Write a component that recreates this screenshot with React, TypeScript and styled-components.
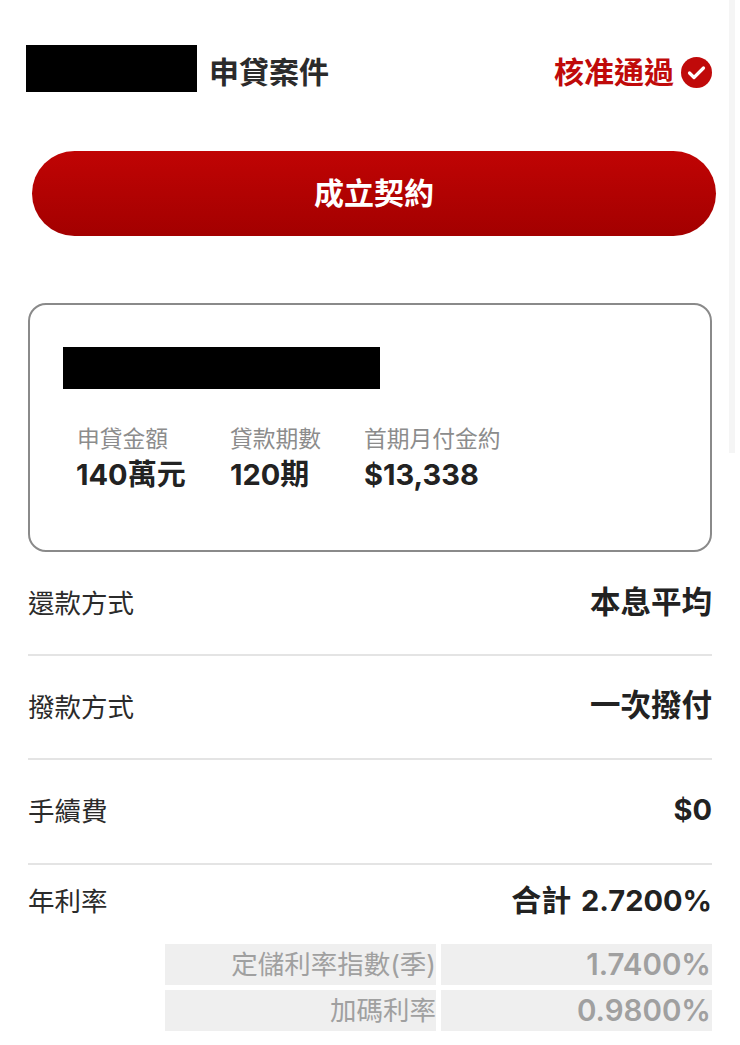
import { createGlobalStyle, styled } from "styled-components";

const GlobalStyle = createGlobalStyle`
  html, body {
    margin: 0;
    background: #fff;
  }
  body {
    font-family: Inter, "Noto Sans CJK TC", sans-serif;
    color: #222;
  }
`;

const Page = styled.div`
  position: relative;
  width: 740px;
  height: 1045px;
  box-sizing: border-box;
  padding: 45px 28px 0 26px;
  overflow: hidden;
`;

const ScrollThumb = styled.div`
  position: absolute;
  top: 0;
  right: 5px;
  width: 6px;
  height: 453px;
  background: #f5f5f5;
`;

const Header = styled.header`
  display: flex;
  align-items: center;
  justify-content: space-between;
  height: 47px;
`;

const HeaderLeft = styled.div`
  display: flex;
  align-items: center;
  gap: 12px;
`;

const Redacted = styled.div<{ $w: number; $h: number }>`
  width: ${(p) => p.$w}px;
  height: ${(p) => p.$h}px;
  background: #000;
`;

const HeaderTitle = styled.h1`
  margin: 0;
  padding-top: 2px;
  font-size: 30px;
  font-weight: 700;
  color: #2b2b2b;
`;

const Status = styled.div`
  display: flex;
  align-items: center;
  gap: 7px;
  padding-top: 2px;
  font-size: 30px;
  font-weight: 700;
  color: #c00a0a;

  svg {
    margin-top: 6px;
  }
`;

const ContractButton = styled.button`
  display: block;
  width: 684px;
  height: 85px;
  margin: 59px 0 0 6px;
  padding: 0 0 6px;
  border: none;
  border-radius: 43px;
  background: linear-gradient(180deg, #c00404 0%, #a30000 100%);
  color: #fff;
  font: 700 30px Inter, "Noto Sans CJK TC", sans-serif;
`;

const Card = styled.section`
  width: 684px;
  height: 249px;
  box-sizing: border-box;
  margin: 67px 0 0 2px;
  padding: 42px 33px 0;
  border: 2px solid #8a8a8a;
  border-radius: 18px;
`;

const Stats = styled.div`
  display: flex;
  margin-top: 33px;
`;

const StatLabel = styled.div`
  font-size: 22.75px;
  line-height: 33px;
  color: #8c8c8c;
`;

const StatValue = styled.div`
  font-size: 29px;
  line-height: 40px;
  font-weight: 700;
  color: #222;
`;

const Stat = styled.div<{ $w: number }>`
  width: ${(p) => p.$w}px;
  box-sizing: border-box;
  padding-left: 14px;

  &:first-child ${StatValue} {
    margin-left: -1px;
  }
`;

const Rows = styled.div`
  margin-left: 2px;
  width: 684px;
`;

const Row = styled.div`
  display: flex;
  align-items: center;
  justify-content: space-between;
  height: 104px;
  padding-bottom: 4px;
  border-bottom: 2px solid #e4e4e4;
  box-sizing: border-box;

  &:nth-child(3) {
    height: 105px;
  }
`;

const RateRow = styled(Row)`
  height: 79px;
  padding-bottom: 10px;
  border-bottom: none;
`;

const RowLabel = styled.div`
  font-size: 26.5px;
  color: #2b2b2b;
`;

const RowValue = styled.div<{ $lift: number }>`
  margin-bottom: ${(p) => p.$lift}px;
  font-size: 29px;
  font-weight: 700;
  color: #222;
`;

const Han = styled.span`
  font-size: 30.5px;
`;

const HanPrefix = styled(Han)`
  margin-right: 3px;
  font-size: 30px;
`;

const Breakdown = styled.div`
  display: grid;
  grid-template-columns: 271px 271px;
  gap: 5px;
  justify-content: end;
`;

const Cell = styled.div<{ $strong?: boolean }>`
  height: 41px;
  line-height: 41px;
  padding-right: ${(p) => (p.$strong ? 1 : 0)}px;
  text-align: right;
  background: #efefef;
  color: #a0a0a0;
  font-size: ${(p) => (p.$strong ? 29.5 : 26.5)}px;
  font-weight: ${(p) => (p.$strong ? 600 : 400)};
`;

const CheckBadge = () => (
  <svg width="31" height="31" viewBox="0 0 31 31">
    <circle cx="15.5" cy="15.5" r="15.5" fill="#c00a0a" />
    <path
      d="M8.5 16l4.5 4.5L22.5 11"
      fill="none"
      stroke="#fff"
      strokeWidth="3.2"
      strokeLinecap="round"
      strokeLinejoin="round"
    />
  </svg>
);

const stats = [
  { label: "申貸金額", value: "140萬元", width: 153 },
  { label: "貸款期數", value: "120期", width: 134 },
  { label: "首期月付金約", value: "$13,338", width: 200 },
];

const rows = [
  { label: "還款方式", value: <Han>本息平均</Han>, lift: 2 },
  { label: "撥款方式", value: <Han>一次撥付</Han>, lift: 4 },
  { label: "手續費", value: "$0", lift: 0 },
];

export default function App() {
  return (
    <>
      <GlobalStyle />
      <Page>
        <ScrollThumb />
        <Header>
          <HeaderLeft>
            <Redacted $w={171} $h={47} />
            <HeaderTitle>申貸案件</HeaderTitle>
          </HeaderLeft>
          <Status>
            核准通過
            <CheckBadge />
          </Status>
        </Header>
        <ContractButton>成立契約</ContractButton>
        <Card>
          <Redacted $w={317} $h={42} />
          <Stats>
            {stats.map((s) => (
              <Stat key={s.label} $w={s.width}>
                <StatLabel>{s.label}</StatLabel>
                <StatValue>{s.value}</StatValue>
              </Stat>
            ))}
          </Stats>
        </Card>
        <Rows>
          {rows.map((r) => (
            <Row key={r.label}>
              <RowLabel>{r.label}</RowLabel>
              <RowValue $lift={r.lift}>{r.value}</RowValue>
            </Row>
          ))}
          <RateRow>
            <RowLabel>年利率</RowLabel>
            <RowValue $lift={4}>
              <HanPrefix>合計</HanPrefix> 2.7200%
            </RowValue>
          </RateRow>
          <Breakdown>
            <Cell>定儲利率指數(季)</Cell>
            <Cell $strong>1.7400%</Cell>
            <Cell>加碼利率</Cell>
            <Cell $strong>0.9800%</Cell>
          </Breakdown>
        </Rows>
      </Page>
    </>
  );
}
